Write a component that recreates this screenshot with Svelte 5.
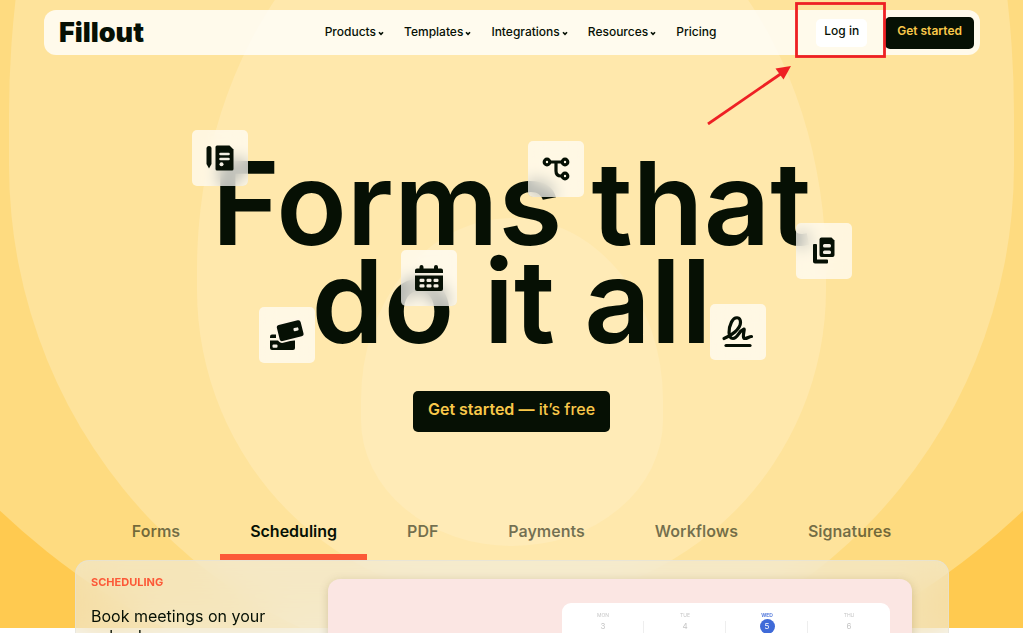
<script>
	const navLinks = [
		{ label: 'Products', hasMenu: true },
		{ label: 'Templates', hasMenu: true },
		{ label: 'Integrations', hasMenu: true },
		{ label: 'Resources', hasMenu: true },
		{ label: 'Pricing', hasMenu: false }
	]

	const tabs = ['Forms', 'Scheduling', 'PDF', 'Payments', 'Workflows', 'Signatures']
	let activeTab = $state('Scheduling')

	const days = [
		{ name: 'Mon', date: 3 },
		{ name: 'Tue', date: 4 },
		{ name: 'Wed', date: 5 },
		{ name: 'Thu', date: 6 }
	]
	const today = 5
</script>

<div class="page">
	<svg class="backdrop" viewBox="0 0 1023 628" preserveAspectRatio="xMidYMin slice" aria-hidden="true">
		<rect width="1023" height="628" fill="#ffca50" />
		<ellipse cx="511.500" cy="0" rx="733" ry="713" fill="#fedb80" />
		<path d="M9 115A502.500 715 0 0 1 1014 115V165A502.500 510 0 0 1 9 165Z" fill="#fee39b" />
		<path d="M197 270A314.500 410 0 0 1 826 270V290A314.500 314 0 0 1 197 290Z" fill="#ffe8ac" />
		<path d="M361 400A151 182 0 0 1 663 400V420A151 126 0 0 1 361 420Z" fill="#ffebb7" />
	</svg>

	<header>
		<a class="logo" href="/">Fillout</a>
		<nav>
			{#each navLinks as { label, hasMenu }}
				<a href="/">
					{label}
					{#if hasMenu}
						<svg width="6" height="5" viewBox="0 0 6 5" aria-hidden="true">
							<path d="M1 1.200L3 3.400L5 1.200" fill="none" stroke="currentColor" stroke-width="1.600" />
						</svg>
					{/if}
				</a>
			{/each}
		</nav>
		<div class="actions">
			<div class="login_container">
				<a class="login" href="/">Log in</a>
				<svg class="callout" width="184" height="126" viewBox="0 0 184 126" aria-hidden="true">
					<rect x="92.500" y="4.500" width="88" height="53" fill="none" stroke="#ee2024" stroke-width="2.800" />
					<path d="M4 125L78 74" stroke="#ee2024" stroke-width="2.800" />
					<path d="M87 67L71.500 69.500L79.500 80.500Z" fill="#ee2024" />
				</svg>
			</div>
			<a class="signup" href="/">Get started</a>
		</div>
	</header>

	<main>
		<section class="hero">
			<div class="headline">
				<h1>Forms that<br />do it all</h1>
				<span class="tile tile_form">
					<svg viewBox="0 0 56 56" aria-hidden="true">
						<path d="M14.500 18.500Q14.500 16 17 16T19.500 18.500V34L17 38.500L14.500 34Z" />
						<path d="M25 15.500H37.500L41.500 19.500V39Q41.500 40.500 40 40.500H25Q23.500 40.500 23.500 39V17Q23.500 15.500 25 15.500Z" />
						<path class="cut_line" d="M28.500 24H36.500M28.500 29H36.500" />
						<circle class="cut" cx="29.500" cy="34.300" r="2" />
					</svg>
				</span>
				<span class="tile tile_flow">
					<svg viewBox="0 0 56 56" aria-hidden="true">
						<g class="line">
							<circle cx="19" cy="21" r="2.800" />
							<circle cx="37" cy="21" r="2.800" />
							<circle cx="37" cy="35" r="2.800" />
							<path d="M22 21H34M28 21V30Q28 35 33 35H34" />
						</g>
					</svg>
				</span>
				<span class="tile tile_copy">
					<svg viewBox="0 0 56 56" aria-hidden="true">
						<path d="M17 22Q17 21 18 21H20Q21 21 21 22V36.500H31Q32 36.500 32 37.500V39.500Q32 40.500 31 40.500H19Q17 40.500 17 38.500Z" />
						<path d="M25.500 14.500H35.500L38.500 17.500V32Q38.500 34 36.500 34H25.500Q23.500 34 23.500 32V16.500Q23.500 14.500 25.500 14.500Z" />
						<rect class="cut" x="27" y="21" width="8" height="3.600" rx="1.500" />
						<rect class="cut" x="27" y="27.400" width="8" height="3.600" rx="1.500" />
					</svg>
				</span>
				<span class="tile tile_calendar">
					<svg viewBox="0 0 56 56" aria-hidden="true">
						<path d="M14 23V20.500Q14 18.500 16 18.500H18.500V17Q18.500 15 20.500 15T22.500 17V18.500H33V17Q33 15 35 15T37 17V18.500H40Q42 18.500 42 20.500V23Z" />
						<path d="M14 25.500H42V39Q42 41 40 41H16Q14 41 14 39Z" />
						<g class="cut">
							<rect x="18.500" y="28.800" width="5" height="3.200" rx="1.200" />
							<rect x="25.500" y="28.800" width="5" height="3.200" rx="1.200" />
							<rect x="32.500" y="28.800" width="5" height="3.200" rx="1.200" />
							<rect x="18.500" y="34.200" width="5" height="3.200" rx="1.200" />
							<rect x="25.500" y="34.200" width="5" height="3.200" rx="1.200" />
							<rect x="32.500" y="34.200" width="5" height="3.200" rx="1.200" />
						</g>
					</svg>
				</span>
				<span class="tile tile_payment">
					<svg viewBox="0 0 56 56" aria-hidden="true">
						<path d="M11 31V29.500Q11 27.500 13 27.500H17V31Z" />
						<path d="M11 33.500H36V41Q36 43 34 43H13Q11 43 11 41Z" />
						<rect class="cut" x="13.500" y="37.500" width="5" height="3.200" rx="1" />
						<rect class="card" x="19" y="15.500" width="24.500" height="16.500" rx="2.500" transform="rotate(-14 31 24)" />
						<rect class="cut" x="34.500" y="20.700" width="5" height="3.200" rx="1" transform="rotate(-14 37 22.300)" />
					</svg>
				</span>
				<span class="tile tile_signature">
					<svg viewBox="0 0 56 56" aria-hidden="true">
						<g class="line">
							<path d="M14 34.500C21 32 30.500 25 30.500 18.500C30.500 12.500 24.500 12 21.500 18C18.500 24 17.500 34.500 23 34.500C28 34.500 28.500 27 34 25C35 25 31.500 34.500 35 34.500C37.500 34.500 39 32.500 41.500 32.500" />
							<path d="M16 41.500H40" />
						</g>
					</svg>
				</span>
			</div>
			<a class="cta" href="/"><strong>Get started —</strong> it’s free</a>
		</section>

		<div class="tabs" role="tablist">
			{#each tabs as tab}
				<button
					role="tab"
					aria-selected={tab === activeTab}
					class:active={tab === activeTab}
					onclick={() => (activeTab = tab)}
				>
					{tab}
				</button>
			{/each}
		</div>

		<section class="panel">
			<div class="copy">
				<p class="eyebrow">{activeTab}</p>
				<h2>Book meetings on your calendar</h2>
			</div>
			<div class="preview">
				<div class="week">
					{#each days as { name, date }}
						<div class="day" class:today={date === today}>
							<span class="day_name">{name}</span>
							<span class="day_date">{date}</span>
						</div>
					{/each}
				</div>
			</div>
		</section>
	</main>
</div>

<style>
	:global(body) {
		background: #fff;
		overflow-x: hidden;
	}

	.page {
		position: relative;
		color: #061004;
		font-family: Inter, "Liberation Sans", sans-serif;
	}

	.page a {
		color: inherit;
		text-decoration: none;
	}

	/* rings behind everything, the panel hangs over the bottom edge */
	.backdrop {
		position: absolute;
		top: 0;
		left: 0;
		width: 100%;
		height: 628px;
	}

	header {
		position: relative;
		z-index: 2;
		display: grid;
		grid-template-columns: 1fr auto 1fr;
		align-items: center;
		margin: 0 43px 0 44px;
		top: 10px;
		height: 45px;
		padding: 0 6px 0 15px;
		box-sizing: border-box;
		border-radius: 12px;
		background: rgba(255, 255, 255, 0.8);
	}

	.logo {
		font-size: 27px;
		font-weight: 900;
	}

	nav {
		display: flex;
		gap: 20px;
		margin-left: 8px;
		padding-bottom: 2px;
		font-size: 12px;
		font-weight: 500;
	}

	nav a {
		display: flex;
		align-items: center;
		gap: 2px;
	}

	nav svg {
		margin-top: 3px;
	}

	.actions {
		display: flex;
		align-items: center;
		justify-content: flex-end;
		gap: 18px;
		font-size: 12px;
		line-height: 16px;
	}

	.login_container {
		position: relative;
	}

	.login {
		display: block;
		padding: 4px 8px 8px;
		border-radius: 5px;
		background: #fff;
		font-weight: 500;
	}

	.callout {
		position: absolute;
		top: -20px;
		right: -21px;
		z-index: 1;
		pointer-events: none;
	}

	.page .signup {
		padding: 6px 12px 10px;
		border-radius: 5px;
		background: #061004;
		color: #f9c84a;
		font-weight: 600;
	}

	main {
		position: relative;
		padding-top: 110px;
	}

	.hero {
		display: flex;
		flex-direction: column;
		align-items: center;
	}

	.headline {
		position: relative;
		width: 660px;
		margin-top: -1px;
		text-align: center;
	}

	h1 {
		margin: 0;
		font-size: 116px;
		font-weight: 600;
		line-height: 98px;
	}

	.tile {
		position: absolute;
		width: 56px;
		height: 56px;
		border-radius: 5px;
		background: rgba(255, 255, 255, 0.68);
		backdrop-filter: blur(8px);
	}

	.tile svg {
		display: block;
		fill: #061004;
	}

	.tile_form {
		top: -24px;
		left: 10px;
	}

	.tile_flow {
		top: -13px;
		left: 346px;
	}

	.tile_copy {
		top: 69px;
		left: 614px;
	}

	.tile_calendar {
		top: 96px;
		left: 219px;
	}

	.tile_payment {
		top: 153px;
		left: 77px;
	}

	.tile_signature {
		top: 150px;
		left: 528px;
	}

	.tile .cut {
		fill: #f3eee2;
	}

	.cut_line {
		stroke: #f3eee2;
		stroke-width: 2.6;
		stroke-linecap: round;
	}

	.line {
		fill: none;
		stroke: #061004;
		stroke-width: 3.2;
		stroke-linecap: round;
		stroke-linejoin: round;
	}

	.card {
		stroke: #fff6e6;
		stroke-width: 3.6;
		paint-order: stroke;
	}

	.page .cta {
		margin-top: 41px;
		padding: 8px 15px 13px;
		border-radius: 5px;
		background: #061004;
		color: #f9c84a;
		font-size: 16px;
		font-weight: 500;
		line-height: 20px;
	}

	.cta strong {
		font-weight: 600;
	}

	.tabs {
		display: flex;
		justify-content: center;
		gap: 10px;
		margin-top: 82px;
	}

	.tabs button {
		padding: 6px 30px 12px;
		border: 0;
		border-bottom: 6px solid transparent;
		background: none;
		color: rgba(6, 16, 4, 0.56);
		font: 600 16px/22px Inter, "Liberation Sans", sans-serif;
		cursor: pointer;
	}

	.tabs button.active {
		border-color: #fc5938;
		color: #061004;
	}

	.panel {
		display: flex;
		justify-content: space-between;
		margin: 0 74px 0 75px;
		padding: 18px 36px 0 15px;
		border: 1px solid rgba(225, 225, 220, 0.6);
		border-radius: 14px;
		background: rgba(236, 236, 232, 0.55);
		backdrop-filter: blur(18px);
	}

	.copy {
		width: 210px;
	}

	.eyebrow {
		margin: 0;
		color: #fc5938;
		font-size: 11px;
		font-weight: 700;
		line-height: 6px;
		text-transform: uppercase;
	}

	h2 {
		margin: 21px 0 0;
		font-size: 16px;
		font-weight: 400;
		line-height: 20px;
	}

	.preview {
		flex: 0 1 584px;
		box-sizing: border-box;
		padding: 24px 22px 0 234px;
		border-radius: 12px;
		background: #fbe6e3;
		box-shadow: 0 2px 10px rgba(90, 70, 20, 0.22);
	}

	.week {
		display: flex;
		border-radius: 9px 9px 0 0;
		background: #fff;
	}

	.day {
		flex: 1;
		display: flex;
		flex-direction: column;
		align-items: center;
		padding: 8px 0;
		background: linear-gradient(#eee, #eee) right 18px / 1px 100% no-repeat;
		color: #c6c6c6;
		font-size: 5px;
		line-height: 8px;
	}

	.day:last-child {
		background: none;
	}

	.day_name {
		text-transform: uppercase;
	}

	.day_date {
		width: 15px;
		border-radius: 50%;
		font-size: 8px;
		line-height: 15px;
		text-align: center;
	}

	.today .day_name {
		color: #3f6ad8;
		font-weight: 600;
	}

	.today .day_date {
		background: #3f6ad8;
		color: #fff;
	}
</style>
